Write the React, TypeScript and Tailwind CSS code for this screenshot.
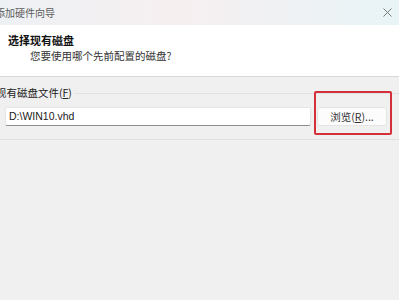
import React from 'react';

const cjk = '"Noto Sans CJK SC", "Noto Sans", sans-serif';

const CloseIcon = () => (
  <svg width="9" height="9" viewBox="0 0 9 9" className="text-[#7a7a7a]">
    <path d="M0.5 0.5 L8.5 8.5 M8.5 0.5 L0.5 8.5" stroke="currentColor" strokeWidth="1" fill="none" />
  </svg>
);

export default function App() {
  return (
    <div
      className="relative w-[399px] h-[300px] overflow-hidden bg-[#f0f0f0]"
      style={{ fontFamily: cjk }}
    >
      {/* Title bar */}
      <div className="flex h-[25px] items-center justify-between bg-[linear-gradient(90deg,#eef1f4_0%,#f6eff0_45%,#e8f4f7_100%)] pr-[7px]">
        <span className="ml-[-5px] text-[10px] leading-[14px] text-[#5c5c5c]">添加硬件向导</span>
        <CloseIcon />
      </div>

      {/* Header */}
      <div className="h-[52px] border-b border-[#d8d8d8] bg-white pl-[8px] pt-[8px]">
        <div className="text-[11px] font-bold leading-[14px] text-[#111]">选择现有磁盘</div>
        <div className="mt-[2px] pl-[22px] text-[10.5px] leading-[14px] text-[#333]">您要使用哪个先前配置的磁盘?</div>
      </div>

      {/* Group box */}
      <div className="pt-[9px]">
        <div className="flex items-center">
          <span className="ml-[-4px] text-[10.5px] leading-[14px] text-[#222]">
            现有磁盘文件(<span className="underline">F</span>)
          </span>
          <div className="ml-[2px] h-px flex-1 bg-[#e2e2e2]" />
        </div>
        <div className="mt-[7px] flex items-center pl-[5px] pr-[12px]">
          <div className="flex h-[19px] w-[306px] items-center rounded-[2px] border border-b-[#8d8d8d] border-[#e6e6e6] bg-white pl-[3px]">
            <span className="text-[10.5px] text-[#1a1a1a]" style={{ fontFamily: '"Liberation Sans", Arial, sans-serif' }}>
              D:\WIN10.vhd
            </span>
          </div>
          <div className="ml-[6px] flex h-[19px] w-[70px] items-center justify-center rounded-[3px] border border-[#e4e4e4] bg-[#fcfcfc] text-[10.5px] text-[#333]">
            浏览(<span className="underline">R</span>)...
          </div>
        </div>
        <div className="mt-[13px] h-px bg-[#e2e2e2]" />
      </div>

      {/* Red highlight annotation */}
      <div className="absolute left-[314px] top-[91px] h-[44px] w-[78px] rounded-[2px] border-2 border-[#d3303a]" />
    </div>
  );
}
